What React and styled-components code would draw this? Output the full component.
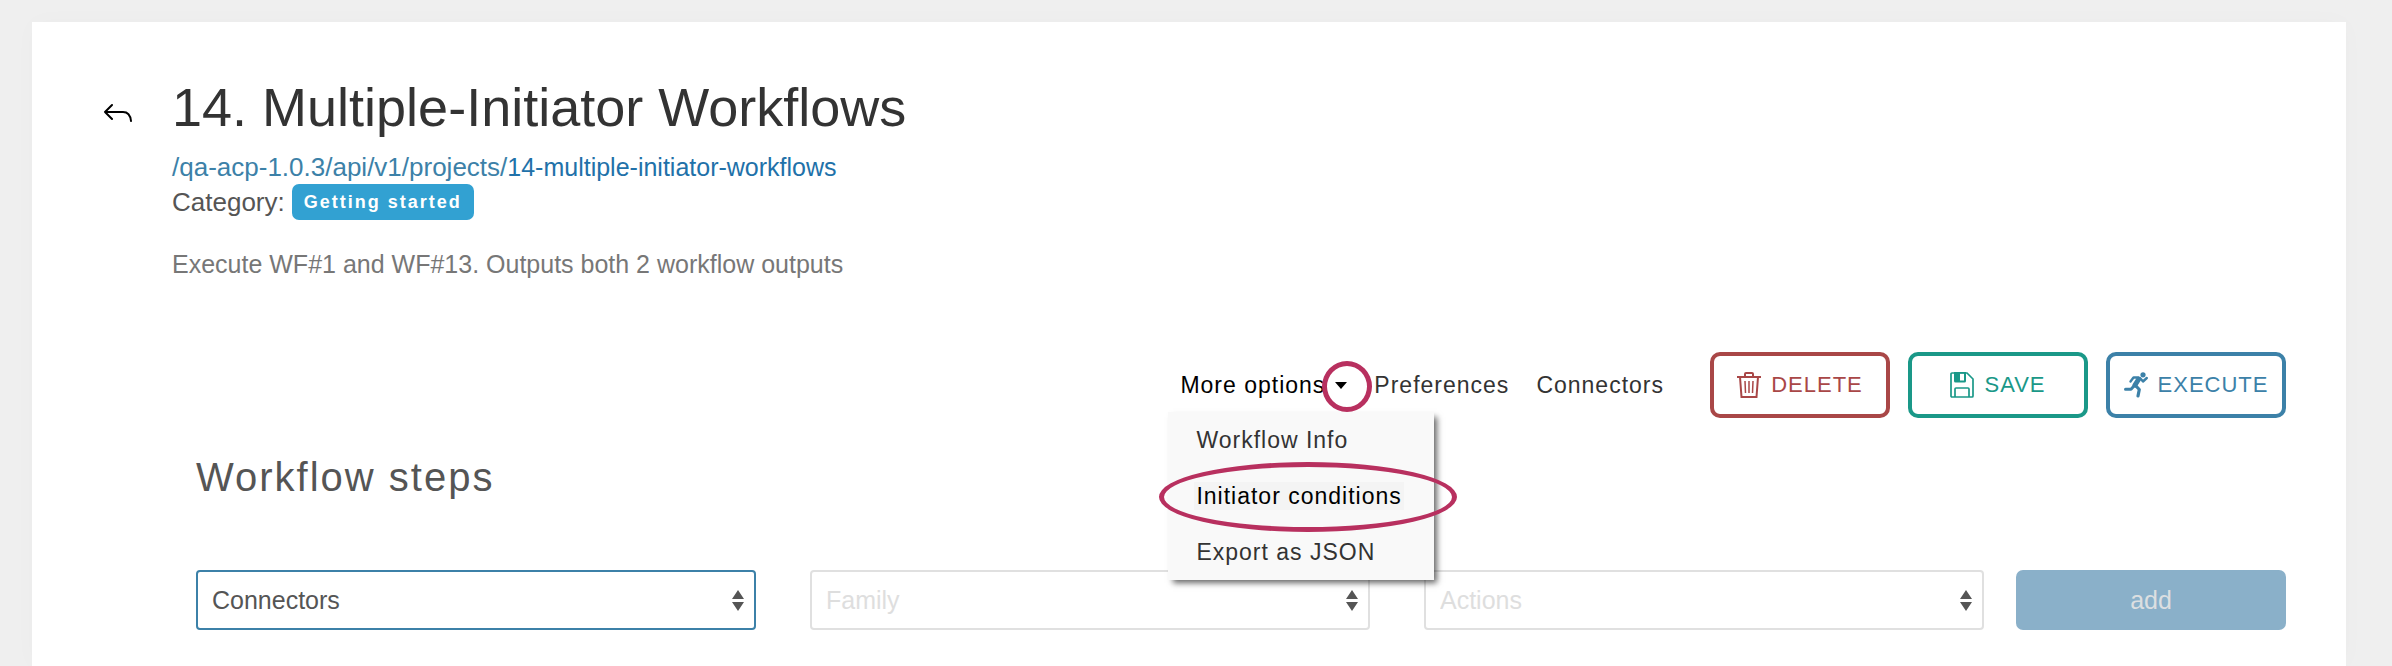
import { useState } from "react";
import styled, { createGlobalStyle, css } from "styled-components";

const GlobalStyle = createGlobalStyle`
  *, *::before, *::after {
    box-sizing: border-box;
  }
  body {
    margin: 0;
    background: #efefef;
    color: #555;
    font-family: "Liberation Sans", Arial, sans-serif;
    font-size: 25px;
    line-height: 34px;
  }
  button, select {
    font-family: inherit;
  }
  h1, h2, p, ul {
    margin: 0;
    padding: 0;
  }
`;

const Page = styled.div`
  min-height: 100vh;
  padding: 22px 46px 0 32px;
  display: flex;
`;

const Card = styled.main`
  flex: 1;
  padding: 55px 60px 36px 71px;
  background: #fff;
  box-shadow: 0 0 24px rgba(0, 0, 0, 0.02);
`;

const Header = styled.header`
  display: flex;
  align-items: flex-start;
  gap: 40px;
`;

const BackButton = styled.button`
  margin-top: 26px;
  padding: 0;
  border: 0;
  background: none;
  color: #000;
  cursor: pointer;

  svg {
    display: block;
  }
`;

const Title = styled.h1`
  margin-bottom: 13px;
  color: #333;
  font-size: 54px;
  font-weight: 400;
  line-height: 60px;
`;

const ProjectLink = styled.a`
  display: block;
  color: #3c81a8;
  font-size: 26px;
  text-decoration: none;

  strong {
    color: #2171a9;
    font-size: 25px;
    font-weight: 400;
  }
`;

const Category = styled.div`
  display: flex;
  align-items: center;
  gap: 7px;
  font-size: 26px;
`;

const Badge = styled.span`
  padding: 0 12px;
  border-radius: 7px;
  background: #32a1d2;
  color: #fff;
  font-size: 18px;
  font-weight: 700;
  line-height: 36px;
  letter-spacing: 2px;
`;

const Description = styled.p`
  margin-top: 27px;
  color: #777;
`;

const Actions = styled.div`
  margin-top: 71px;
  display: flex;
  align-items: center;
  justify-content: flex-end;
  gap: 18px;
`;

const Nav = styled.nav`
  margin-right: 28px;
  display: flex;
  align-items: center;
  gap: 27px;
`;

const navText = css`
  color: ${({ $active }) => ($active ? "#000" : "#333")};
  font-size: 23px;
  letter-spacing: 1px;
  text-decoration: none;
`;

const NavLink = styled.a`
  ${navText}
  line-height: 26px;
`;

const Dropdown = styled.div`
  position: relative;
  display: flex;
`;

const Trigger = styled.button`
  ${navText}
  padding: 0;
  border: 0;
  background: none;
  display: flex;
  align-items: center;
  gap: 10px;
  line-height: 26px;
  cursor: pointer;
`;

const Caret = styled.span`
  position: relative;
  border: 6px solid transparent;
  border-top: 7px solid #000;
  border-bottom: 0;
`;

const Ring = styled.span`
  position: absolute;
  z-index: 2;
  border: 5px solid #b8305f;
  border-radius: 50%;
  pointer-events: none;
`;

const CaretRing = styled(Ring)`
  top: -28px;
  left: -19px;
  width: 50px;
  height: 51px;
`;

const ItemRing = styled(Ring)`
  top: -6px;
  right: -23px;
  bottom: -8px;
  left: -9px;
`;

const Menu = styled.ul`
  position: absolute;
  top: 40px;
  left: -12px;
  z-index: 1;
  min-width: 266px;
  background: #f9f9f9;
  box-shadow: 4px 4px 6px -1px rgba(0, 0, 0, 0.6);
  list-style: none;
`;

const MenuItem = styled.li`
  position: relative;
  height: 56px;
  padding: 0 26px;
  display: flex;
  align-items: center;
`;

const MenuLink = styled.a`
  ${navText}
  padding: 0 2px;
  background: ${({ $active }) => ($active ? "#f4f4f4" : "none")};
  line-height: 28px;
  white-space: nowrap;
`;

const OutlineButton = styled.button`
  width: 180px;
  height: 66px;
  padding: 0;
  display: flex;
  align-items: center;
  justify-content: center;
  gap: 10px;
  border: 4px solid ${({ $color }) => $color};
  border-radius: 10px;
  background: #fff;
  color: ${({ $color }) => $color};
  font-size: 22px;
  letter-spacing: 1px;
  cursor: pointer;
`;

const Steps = styled.section`
  margin: 37px 0 0 93px;
`;

const StepsTitle = styled.h2`
  color: #555;
  font-size: 40px;
  font-weight: 400;
  line-height: 44px;
  letter-spacing: 2px;
`;

const StepForm = styled.form`
  margin-top: 71px;
  display: flex;
  gap: 32px;
`;

const Selects = styled.div`
  flex: 1;
  display: grid;
  grid-template-columns: repeat(3, 1fr);
  gap: 54px;
`;

const SelectBox = styled.div`
  position: relative;

  svg {
    position: absolute;
    top: 20px;
    right: 12px;
    pointer-events: none;
  }
`;

const Select = styled.select`
  display: block;
  width: 100%;
  height: 60px;
  padding: 0 14px;
  appearance: none;
  border: 2px solid #3c81a8;
  border-radius: 4px;
  background: #fff;
  color: #555;
  font-size: 25px;
  outline: 0;

  &:disabled {
    border-color: #e0e0e0;
    color: #dedede;
    opacity: 1;
  }
`;

const AddButton = styled.button`
  width: 270px;
  height: 60px;
  border: 0;
  border-radius: 7px;
  background: #8ab0c9;
  color: #dcdfe1;
  font-size: 25px;
`;

function BackIcon() {
  return (
    <svg width="29" height="19" viewBox="0 0 29 19" fill="none" stroke="currentColor" strokeWidth="2" strokeLinecap="round" strokeLinejoin="round">
      <path d="M9 2L2 9l7 7M2 9h18q7 0 8 9" />
    </svg>
  );
}

function TrashIcon() {
  return (
    <svg width="24" height="26" viewBox="0 0 24 26" fill="none" stroke="currentColor">
      <path d="M0 5h24" strokeWidth="2" />
      <path d="M8 5V2q0-1 1-1h6q1 0 1 1v3" strokeWidth="2" />
      <path d="M3 5l1.500 20h15L21 5" strokeWidth="2" />
      <path d="M8 9l.5 12M12 9v12M16 9l-.5 12" strokeWidth="1.500" />
    </svg>
  );
}

function SaveIcon() {
  return (
    <svg width="24" height="26" viewBox="0 0 24 26" fill="none" stroke="currentColor" strokeWidth="1.700">
      <path d="M1 2q0-1 1-1h15l6 6v17q0 1-1 1H2q-1 0-1-1z" />
      <path d="M4 0h12v9q0 1.500-1.500 1.500h-9Q4 10.500 4 9zM10 1.500V8.500h4V1.500z" fill="currentColor" fillRule="evenodd" stroke="none" />
      <path d="M5 25v-8q0-1 1-1h12q1 0 1 1v8" />
    </svg>
  );
}

function RunIcon() {
  return (
    <svg width="24" height="26" viewBox="0 0 24 26" fill="none" stroke="currentColor" strokeLinecap="round" strokeLinejoin="round">
      <circle cx="19" cy="2.800" r="2.600" fill="currentColor" stroke="none" />
      <path d="M6.500 9.500L9.500 5.500H14.500" strokeWidth="2.400" />
      <path d="M14.500 7.500L11 13" strokeWidth="5" />
      <path d="M16 6l3 3.500L22.800 6" strokeWidth="2.400" />
      <path d="M11.500 13.500l3.800 4L14 24" strokeWidth="3.200" />
      <path d="M10 14l-3 3.300H1.500" strokeWidth="3" />
    </svg>
  );
}

function SortArrows() {
  return (
    <svg width="12" height="21" viewBox="0 0 12 21" fill="#555">
      <path d="M6 0l6 9H0zM0 12h12l-6 9z" />
    </svg>
  );
}

const menuItems = ["Workflow Info", "Initiator conditions", "Export as JSON"];

const buttons = [
  { label: "DELETE", color: "#a94747", icon: <TrashIcon /> },
  { label: "SAVE", color: "#1a9888", icon: <SaveIcon /> },
  { label: "EXECUTE", color: "#3c81a8", icon: <RunIcon /> },
];

function MoreOptions() {
  const [open, setOpen] = useState(true);

  return (
    <Dropdown>
      <Trigger type="button" $active aria-expanded={open} onClick={() => setOpen(!open)}>
        More options
        <Caret>
          <CaretRing />
        </Caret>
      </Trigger>
      {open && (
        <Menu>
          {menuItems.map((item) => {
            const active = item === "Initiator conditions";
            return (
              <MenuItem key={item}>
                <MenuLink href="#" $active={active}>{item}</MenuLink>
                {active && <ItemRing />}
              </MenuItem>
            );
          })}
        </Menu>
      )}
    </Dropdown>
  );
}

function StepSelect({ name, disabled }) {
  return (
    <SelectBox>
      <Select aria-label={name} disabled={disabled}>
        <option>{name}</option>
      </Select>
      <SortArrows />
    </SelectBox>
  );
}

function App() {
  return (
    <>
      <GlobalStyle />
      <Page>
        <Card>
          <Header>
            <BackButton type="button" aria-label="Back">
              <BackIcon />
            </BackButton>
            <div>
              <Title>14. Multiple-Initiator Workflows</Title>
              <ProjectLink href="#">
                /qa-acp-1.0.3/api/v1/projects/<strong>14-multiple-initiator-workflows</strong>
              </ProjectLink>
              <Category>
                Category: <Badge>Getting started</Badge>
              </Category>
              <Description>Execute WF#1 and WF#13. Outputs both 2 workflow outputs</Description>
            </div>
          </Header>

          <Actions>
            <Nav>
              <MoreOptions />
              <NavLink href="#">Preferences</NavLink>
              <NavLink href="#">Connectors</NavLink>
            </Nav>
            {buttons.map(({ label, color, icon }) => (
              <OutlineButton key={label} type="button" $color={color}>
                {icon}
                {label}
              </OutlineButton>
            ))}
          </Actions>

          <Steps>
            <StepsTitle>Workflow steps</StepsTitle>
            <StepForm>
              <Selects>
                <StepSelect name="Connectors" />
                <StepSelect name="Family" disabled />
                <StepSelect name="Actions" disabled />
              </Selects>
              <AddButton type="button" disabled>add</AddButton>
            </StepForm>
          </Steps>
        </Card>
      </Page>
    </>
  );
}

export default App;
